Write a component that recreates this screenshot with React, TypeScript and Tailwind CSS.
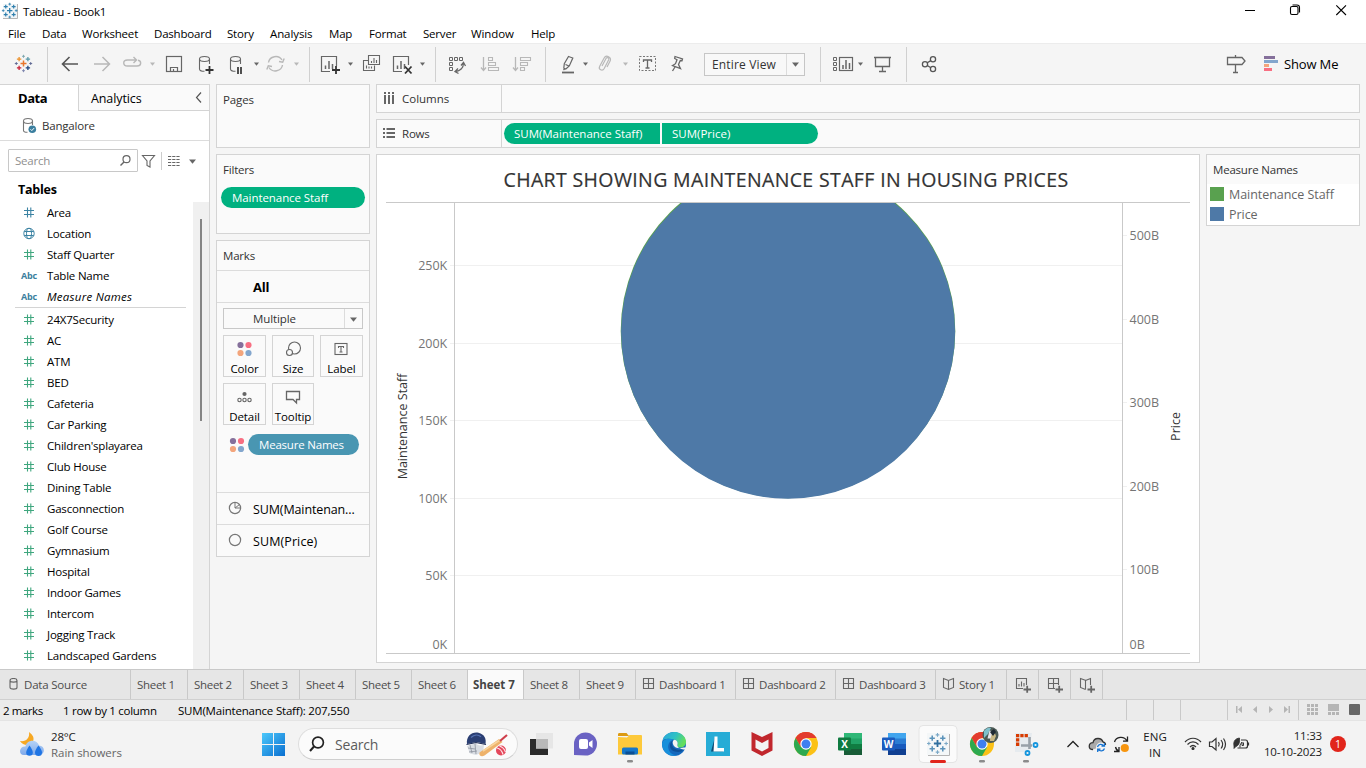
import React from "react";

type P = { x: number; y: number; w: number; h: number; children?: React.ReactNode };

/* An inline drawing whose viewBox is expressed in window coordinates. */
function Ic({ x, y, w, h, children }: P) {
  return (
    <svg
      width={w}
      height={h}
      viewBox={`${x} ${y} ${w} ${h}`}
      fill="none"
      className="block shrink-0"
      stroke="#666"
      strokeWidth="1.2"
    >
      {children}
    </svg>
  );
}

const G = "#666666";
const L = "#b8b8b8";

function Caret({ x, y = 63, c = G, s = 2.5 }: { x: number; y?: number; c?: string; s?: number }) {
  return <path d={`M${x - s} ${y - 0.5}h${2 * s}l${-s} ${s + 0.8}z`} fill={c} stroke="none" />;
}

function Plus({ x, y, r, c, w = 1 }: { x: number; y: number; r: number; c: string; w?: number }) {
  return <path d={`M${x - r} ${y}h${2 * r}M${x} ${y - r}v${2 * r}`} stroke={c} strokeWidth={w} />;
}

function Logo({ x, y, s, c }: { x: number; y: number; s: number; c: string[] }) {
  const a = 4.4 * s;
  const b = 7.2 * s;
  return (
    <>
      <Plus x={x} y={y} r={3 * s} c={c[0]} w={1.5 * s} />
      <Plus x={x - a} y={y - a} r={2.2 * s} c={c[1]} w={1.3 * s} />
      <Plus x={x + a} y={y - a} r={2.2 * s} c={c[2]} w={1.3 * s} />
      <Plus x={x - a} y={y + a} r={2.2 * s} c={c[3]} w={1.3 * s} />
      <Plus x={x + a} y={y + a} r={2.2 * s} c={c[4]} w={1.3 * s} />
      <Plus x={x} y={y - b} r={1.5 * s} c={c[5]} w={0.9 * s} />
      <Plus x={x - b} y={y} r={1.5 * s} c={c[6]} w={0.9 * s} />
      <Plus x={x + b} y={y} r={1.5 * s} c={c[7]} w={0.9 * s} />
      <Plus x={x} y={y + b} r={1.5 * s} c={c[8]} w={0.9 * s} />
    </>
  );
}

const BLUES = Array(9).fill("#2f7fae");
const TASK_BLUES = ["#2f6f9f", "#5b93ba", "#5b93ba", "#5b93ba", "#5b93ba", "#7ba8c6", "#7ba8c6", "#7ba8c6", "#7ba8c6"];
const COLORS = ["#e8762c", "#eb912c", "#5b9aa9", "#c72037", "#1f457e", "#7aa5ad", "#5c6692", "#5c6692", "#7b83ad"];

function Sep({ x }: { x: number }) {
  return <path d={`M${x + 0.5} 47v35`} stroke="#d0d0d0" strokeWidth="1" />;
}

function Cyl({ x, y }: { x: number; y: number }) {
  return (
    <path d={`M${x} ${y + 2.5}c0-3.3 10-3.3 10 0s-10 3.3-10 0v10c0 1.4 2 2.3 5 2.3M${x + 10} ${y + 2.5}v5`} strokeWidth="1.1" />
  );
}

function Dots({ x, y }: { x: number; y: number }) {
  return (
    <g stroke="none">
      <circle cx={x - 4} cy={y - 4} r="3.1" fill="#85709b" />
      <circle cx={x + 4} cy={y - 4} r="3.1" fill="#f86f82" />
      <circle cx={x - 4} cy={y + 4} r="3.1" fill="#f3a57c" />
      <circle cx={x + 4} cy={y + 4} r="3.1" fill="#83a6cd" />
    </g>
  );
}

function TitleBar() {
  return (
    <div className="flex h-[23px] w-full items-center justify-between">
      <div className="flex items-center">
        <Ic x={0} y={0} w={23} h={23}>
          <path d="M3 4h14v14H3z" fill="#f2f6f8" stroke="none" />
          <path d="M17.5 4v14.500H3" stroke="#b5b5b5" strokeWidth="1" />
          <Logo x={9.7} y={10.6} s={0.9} c={BLUES} />
        </Ic>
        <span>Tableau - Book1</span>
      </div>
      <Ic x={1236} y={0} w={130} h={23}>
        <path d="M1245 10.500h10" stroke="#000" strokeWidth="1" />
        <rect x="1290.500" y="6.500" width="7.500" height="8" rx="1.500" stroke="#000" strokeWidth="1.100" />
        <path d="M1292.500 5h4.500a2.500 2.500 0 0 1 2.500 2.500v5" stroke="#000" strokeWidth="1.100" />
        <path d="M1336.300 5.300l9.700 9.700M1346 5.300l-9.700 9.700" stroke="#000" strokeWidth="1.100" />
      </Ic>
    </div>
  );
}

function Menu() {
  return (
    <div className="flex h-5 w-full items-center pl-2 pt-[2px]">
      <span className="w-[34px]">File</span>
      <span className="w-[40px]">Data</span>
      <span className="w-[72px] tracking-[-0.2px]">Worksheet</span>
      <span className="w-[73px]">Dashboard</span>
      <span className="w-[43px]">Story</span>
      <span className="w-[59px] tracking-[-0.1px]">Analysis</span>
      <span className="w-[40px]">Map</span>
      <span className="w-[54px]">Format</span>
      <span className="w-[48px]">Server</span>
      <span className="w-[60px] tracking-[-0.1px]">Window</span>
      <span>Help</span>
    </div>
  );
}

function Bars({ x, y }: { x: number; y: number }) {
  return <path d={`M${x} ${y}v-3.500M${x + 3.5} ${y}v-8M${x + 7} ${y}v-5`} strokeWidth="1.500" />;
}

function Toolbar() {
  return (
    <div className="flex h-[41px] w-full items-center border-t border-[#ececec] bg-[#f5f5f5]">
      <Ic x={0} y={44} w={55} h={40}>
        <Logo x={23.5} y={63.5} s={1} c={COLORS} />
        <Sep x={47} />
      </Ic>
      <Ic x={55} y={44} w={64} h={40}>
        <path d="M78 64H63M69.500 57l-7 7 7 7" stroke="#555" strokeWidth="1.600" />
        <path d="M94 64h15M102.500 57l7 7-7 7" stroke={L} strokeWidth="1.500" />
      </Ic>
      <Ic x={119} y={44} w={42} h={40}>
        <path d="M138 60.300c3.800.7 3.600 5.700-1 5.700h-9.500c-5 0-5-6 0-6h8.500M133.500 57l3 3-3 3" stroke={L} strokeWidth="1.400" />
        <Caret x={152.5} c={L} />
      </Ic>
      <Ic x={161} y={44} w={30} h={40}>
        <rect x="166.500" y="56.500" width="15" height="15" strokeWidth="1.200" />
        <path d="M170.500 71v-3.500h7V71M173.500 71v-2" strokeWidth="1.200" />
      </Ic>
      <Ic x={191} y={44} w={72} h={40}>
        <Cyl x={199.5} y={56.5} />
        <path d="M205.500 70h8M209.500 66v8" stroke="#333" strokeWidth="1.800" />
        <Cyl x={230.5} y={56.5} />
        <path d="M238 67v7M241 67v7" stroke="#333" strokeWidth="1.700" />
        <Caret x={256.5} />
      </Ic>
      <Ic x={263} y={44} w={52} h={40}>
        <path d="M268.500 62.500a7.300 7 0 0 1 13.500-2.500M282.500 65a7.300 7 0 0 1-13.500 2.500M279 61.500l3.700.8 1.500-3.800M272 66.500l-3.700-.8-1.500 3.800" stroke={L} strokeWidth="1.400" />
        <Caret x={296.5} c={L} />
        <Sep x={309} />
      </Ic>
      <Ic x={315} y={44} w={43} h={40}>
        <path d="M330 71.500h-8.500v-15h15V66" />
        <Bars x={325.5} y={69} />
        <path d="M332 70h8M336 66v8" stroke="#333" strokeWidth="1.800" />
        <Caret x={350.5} />
      </Ic>
      <Ic x={358} y={44} w={27} h={40}>
        <path d="M368.500 64.500v-9h11v9z M368 60.500h-4.500v10h11v-5" strokeWidth="1.100" />
        <path d="M371.500 63v-2M374 63v-5M376.500 63v-3M366.500 68.500v-3M369 68.500v-2M371.500 68.500v-2" strokeWidth="1.100" />
      </Ic>
      <Ic x={385} y={44} w={56} h={40}>
        <path d="M402 71.500h-8.500v-15h15V65" />
        <Bars x={397.5} y={69} />
        <path d="M405 66.500l6.500 7M411.500 66.500l-6.500 7" stroke="#333" strokeWidth="1.800" />
        <Caret x={422.5} />
        <Sep x={435} />
      </Ic>
      <Ic x={441} y={44} w={30} h={40}>
        <path d="M449.500 57.500h3v3h-3zM454.500 57.500h3v3h-3zM459.500 57.500h3v3h-3zM449.500 62.500h3v3h-3zM449.500 67.500h3v3h-3z" strokeWidth="1" />
        <path d="M463.500 63c0 5-3.500 8-8 8.500M461 65.500l2.500-3 2 3.500M458 68.500l-3 3 3.500 2" strokeWidth="1.300" />
      </Ic>
      <Ic x={471} y={44} w={32} h={40}>
        <path d="M483.500 57v13M481 67.500l2.500 3 2.500-3" stroke={L} strokeWidth="1.300" />
        <path d="M488.500 57.500h4v3h-4zM488.500 62.500h7v3h-7zM488.500 67.500h10v3h-10z" stroke={L} strokeWidth="1.100" />
      </Ic>
      <Ic x={503} y={44} w={50} h={40}>
        <path d="M515.500 57v13M513 67.500l2.500 3 2.500-3" stroke={L} strokeWidth="1.300" />
        <path d="M520.500 57.500h10v3h-10zM520.500 62.500h7v3h-7zM520.500 67.500h4v3h-4z" stroke={L} strokeWidth="1.100" />
        <Sep x={545} />
      </Ic>
      <Ic x={553} y={44} w={39} h={40}>
        <path d="M562 72.500h12" strokeWidth="1.800" />
        <path d="M568.500 56.500l4.300 1.500-3.500 8-3.500 3-2-.8.5-4.500zM565.500 64.500l3.500 1.500M563.500 70l1.500-1.500" />
        <Caret x={585.5} />
      </Ic>
      <Ic x={592} y={44} w={42} h={40}>
        <path d="M602 66l4-7.500c1-1.800 3.500-.5 2.700 1.200l-4.500 8.800c-1.800 3.300-6.200 1-4.500-2.300l4.300-8c2.200-4 8-1 6 3l-3 5.800" stroke={L} strokeWidth="1.200" />
        <Caret x={625.5} c={L} />
      </Ic>
      <Ic x={634} y={44} w={70} h={40}>
        <rect x="639.500" y="56.500" width="16" height="14" stroke="#777" strokeWidth="1" strokeDasharray="2 1.500" />
        <path d="M643.500 62v-2h8v2M647.500 60v8M645.500 68h4" strokeWidth="1.300" />
        <path d="M675 56.500l7.500 2.500-.5 1.700-1.700-.2-1.800 4 2 4.200-8-3 3-2 1.500-4-2.300-1.200zM675 67l-2.500 4" strokeWidth="1.300" />
      </Ic>
      <div className="flex h-[23px] w-[101px] items-center border border-[#c6c6c6] bg-[#f8f8f8]">
        <span className="w-[81px] pl-[7px] pt-px text-[12px] tracking-[0.15px] text-[#333]">Entire View</span>
        <div className="flex h-full items-center border-l border-[#dcdcdc]">
          <Ic x={787} y={54} w={17} h={20}>
            <Caret x={795.5} s={3.5} />
          </Ic>
        </div>
      </div>
      <Ic x={805} y={44} w={105} h={40}>
        <Sep x={820} />
        <path d="M833.500 57.500h3v3h-3zM833.500 62.500h3v3h-3zM833.500 67.500h3v3h-3z" strokeWidth="1" />
        <rect x="839.500" y="57.500" width="13" height="13" />
        <path d="M843 69v-4M846 69v-9M849.500 69v-6" strokeWidth="1.500" />
        <Caret x={860.5} />
        <path d="M874 57.500h17M875.500 58v8.500h14V58M882.500 67v4M879 71.500h7" strokeWidth="1.300" />
        <Sep x={906} />
      </Ic>
      <Ic x={910} y={44} w={40} h={40}>
        <g stroke="#555" strokeWidth="1.300">
          <circle cx="925" cy="64.200" r="2.600" />
          <circle cx="933" cy="59.200" r="2.600" />
          <circle cx="933" cy="69" r="2.600" />
          <path d="M927.300 62.800l3.500-2.200M927.300 65.500l3.500 2.200" />
        </g>
      </Ic>
      <div className="grow" />
      <Ic x={1220} y={44} w={64} h={40}>
        <path d="M1227.500 57.500h14.500l3 3.500-3 3.500h-14.500zM1235.500 55v2.500M1235.500 64.500v8M1233 72.500h5" strokeWidth="1.300" />
        <g stroke="none">
          <path d="M1264 56h11v3h-11z" fill="#85709b" />
          <path d="M1264 60h14v3h-14z" fill="#83a6cd" />
          <path d="M1264 64h5v3h-5z" fill="#f3a57c" />
          <path d="M1264 68h8v3h-8z" fill="#f86f82" />
        </g>
      </Ic>
      <span className="w-[82px] text-[13px] tracking-[-0.15px]">Show Me</span>
    </div>
  );
}

function Hash({ c }: { c: string }) {
  return (
    <svg width="12" height="13" viewBox="0 0 12 13" className="mx-auto block">
      <path d="M1 4.500h10M1 8.500h10M4.500 1.500v10M7.800 1.500v10" stroke={c} strokeWidth="1.100" fill="none" />
    </svg>
  );
}

function Field({ kind, name }: { kind: string; name: string }) {
  return (
    <div className="flex h-[21px] items-center pl-[20px]">
      <div className="w-[18px] text-center">
        {kind === "abc" && <span className="block text-[9px] font-bold leading-none tracking-[-0.1px] text-[#3c7f9e]">Abc</span>}
        {kind === "dim" && <Hash c="#3c83a3" />}
        {kind === "mea" && <Hash c="#3fa67e" />}
        {kind === "geo" && (
          <svg width="12" height="13" viewBox="0 0 12 13" fill="none" stroke="#3c83a3" strokeWidth="1" className="mx-auto block">
            <circle cx="6" cy="6.500" r="5.200" />
            <ellipse cx="6" cy="6.500" rx="2.500" ry="5.200" />
            <path d="M1.200 4.500h9.600M1.200 8.500h9.600" />
          </svg>
        )}
      </div>
      <span className={name === "Measure Names" ? "ml-[9px] pt-px italic tracking-[0.25px]" : "ml-[9px] pt-px"}>{name}</span>
    </div>
  );
}

const MEASURES = [
  "24X7Security", "AC", "ATM", "BED", "Cafeteria", "Car Parking", "Children'splayarea", "Club House",
  "Dining Table", "Gasconnection", "Golf Course", "Gymnasium", "Hospital", "Indoor Games", "Intercom",
  "Jogging Track", "Landscaped Gardens",
];

function Sidebar() {
  return (
    <div className="flex h-full w-[210px] shrink-0 flex-col border-r border-[#d4d4d4] bg-white">
      <div className="flex h-[27px] border-t border-[#d4d4d4]">
        <div className="w-[78px] pl-[18px] text-[13px] font-bold leading-[26px] tracking-[-0.45px]">Data</div>
        <div className="flex grow items-center border-b border-l border-[#d4d4d4] bg-[#fafafa] pl-3">
          <span className="w-[102px] pt-[3px] text-[12.5px] tracking-[-0.1px]">Analytics</span>
          <Ic x={193} y={88} w={14} h={18}>
            <path d="M201 91.500l-4.500 5 4.500 5" stroke="#555" />
          </Ic>
        </div>
      </div>
      <div className="flex h-[30px] items-center border-b border-[#dcdcdc] pl-[22px] text-[#333]">
        <Ic x={22} y={115} w={20} h={22}>
          <path d="M23.500 121c0-3.300 9-3.300 9 0s-9 3.300-9 0v9.500c0 1.400 2 1.800 4 1.800M32.500 121v4" stroke="#777" strokeWidth="1.100" />
          <circle cx="32.300" cy="129.300" r="3.800" fill="#3b7f9f" stroke="none" />
          <path d="M30.500 129.300l1.300 1.300 2.300-2.500" stroke="#fff" strokeWidth="1" />
        </Ic>
        <span className="pt-px">Bangalore</span>
      </div>
      <div className="flex h-[39px] items-center pl-2">
        <div className="flex h-[23px] w-[130px] items-center justify-between rounded-[1px] border border-[#c8c8c8] pl-[6px]">
          <span className="pt-px text-[11.5px] tracking-[-0.2px] text-[#8f8f8f]">Search</span>
          <Ic x={118} y={152} w={18} h={18}>
            <circle cx="125.500" cy="159.200" r="3.500" />
            <path d="M123 162l-3.500 3.500" strokeWidth="1.500" />
          </Ic>
        </div>
        <Ic x={138} y={148} w={68} h={24}>
          <path d="M142.500 154.500h12l-4.500 5.500v6l-3-1.500V160z" strokeWidth="1.100" />
          <path d="M161.500 151v18" stroke="#ccc" strokeWidth="1" />
          <path d="M168 155.500h12M168 158.500h12M168 161.500h12M168 164.500h12" strokeDasharray="3.200 1" strokeWidth="1.100" />
          <Caret x={192.5} y={159} s={3.5} />
        </Ic>
      </div>
      <div className="h-[22px] pl-[18px] text-[12.5px] font-bold leading-[20px] tracking-[-0.25px]">Tables</div>
      <div className="flex min-h-0 grow overflow-hidden">
        <div className="w-[193px]">
          <Field kind="dim" name="Area" />
          <Field kind="geo" name="Location" />
          <Field kind="mea" name="Staff Quarter" />
          <Field kind="abc" name="Table Name" />
          <Field kind="abc" name="Measure Names" />
          <div className="ml-[15px] h-[2px] w-[171px] border-t border-[#d4d4d4]" />
          {MEASURES.map((m) => (
            <Field key={m} kind="mea" name={m} />
          ))}
        </div>
        <div className="w-[16px] bg-[#f0f0f0] pl-[7px] pt-[17px]">
          <div className="h-[202px] w-[2px] bg-[#858585]" />
        </div>
      </div>
    </div>
  );
}

function MarkButton({ label, wide, children }: { label: string; wide?: boolean; children: React.ReactNode }) {
  return (
    <div className={(wide ? "w-[43px]" : "w-[42px]") + " flex h-[42px] flex-col items-center border border-[#d4d4d4] bg-[#fafafa]"}>
      <svg width="40" height="25" viewBox="0 0 40 25" fill="none" stroke="#666" strokeWidth="1.100" className="block">
        {children}
      </svg>
      <span className="leading-[15px] tracking-[-0.1px]">{label}</span>
    </div>
  );
}

function Cards() {
  return (
    <div className="flex w-[154px] shrink-0 flex-col gap-[6px]">
      <div className="h-[64px] border border-[#d4d4d4] bg-[#fafafa] pl-[6px] leading-[29px] tracking-[-0.1px] text-[#333]">Pages</div>
      <div className="h-[80px] border border-[#d4d4d4] bg-[#fafafa] text-[#333]">
        <div className="h-[32px] pl-[6px] leading-[29px]">Filters</div>
        <div className="mx-1 h-[21px] rounded-full bg-[#00b180] pl-[11px] leading-[21px] tracking-[-0.07px] text-white">Maintenance Staff</div>
      </div>
      <div className="flex h-[317px] flex-col border border-[#d4d4d4] bg-[#fafafa]">
        <div className="h-[30px] border-b border-[#dcdcdc] pl-[6px] leading-[29px] text-[#333]">Marks</div>
        <div className="h-[32px] border-b border-[#dcdcdc] pl-[36px] text-[13px] font-bold leading-[32px]">All</div>
        <div className="mx-[6px] mt-[5px] flex h-[21px] items-center border border-[#c8c8c8]">
          <span className="w-[120px] pl-[29px] pt-px tracking-[-0.1px] text-[#333]">Multiple</span>
          <div className="flex h-full grow items-center border-l border-[#dcdcdc]">
            <Ic x={345} y={310} w={17} h={18}>
              <Caret x={353.5} y={318} s={3.5} />
            </Ic>
          </div>
        </div>
        <div className="ml-[6px] mt-[6px] grid grid-cols-[43px_42px_43px] gap-[6px]">
          <MarkButton label="Color" wide>
            <Dots x={19.5} y={13} />
          </MarkButton>
          <MarkButton label="Size">
            <circle cx="21.500" cy="12" r="6" />
            <circle cx="16.500" cy="16.500" r="3" fill="#fafafa" />
          </MarkButton>
          <MarkButton label="Label" wide>
            <rect x="13" y="7.500" width="12" height="11" />
            <path d="M16.500 12v-1.500h5V12M19 10.500V16M17.500 16h3" />
          </MarkButton>
          <MarkButton label="Detail" wide>
            <g transform="translate(-1 -1)">
              <circle cx="20.500" cy="11" r="2.100" fill="#666" stroke="none" />
              <circle cx="15.500" cy="17" r="1.700" />
              <circle cx="20.500" cy="17" r="1.700" />
              <circle cx="25.500" cy="17" r="1.700" />
            </g>
          </MarkButton>
          <MarkButton label="Tooltip">
            <path d="M13.500 7.500h13v8h-3v3.500l-3.500-3.500h-6.500z" strokeWidth="1.300" />
          </MarkButton>
        </div>
        <div className="mt-[9px] flex h-[58px]">
          <Ic x={217} y={434} w={31} h={21}>
            <Dots x={237} y={445} />
          </Ic>
          <div className="h-[21px] w-[111px] rounded-full bg-[#4996b2] pl-[11px] leading-[21px] text-white">Measure Names</div>
        </div>
        <div className="flex h-[32px] items-center border-t border-[#dcdcdc]">
          <Ic x={217} y={493} w={36} h={31}>
            <circle cx="235" cy="508" r="5.600" stroke="#777" />
            <path d="M235 502.500v5.500l4.500-3.500M235 508h5" stroke="#777" strokeWidth="1" />
          </Ic>
          <span className="pt-[2px] text-[12.5px] tracking-[-0.12px]">SUM(Maintenan...</span>
        </div>
        <div className="flex h-[32px] items-center border-t border-[#dcdcdc]">
          <Ic x={217} y={525} w={36} h={31}>
            <circle cx="235" cy="540" r="5.600" stroke="#777" />
          </Ic>
          <span className="pt-[2px] text-[12.5px] tracking-[0.1px]">SUM(Price)</span>
        </div>
      </div>
    </div>
  );
}

const LEFT: [string, number][] = [["250K", 265], ["200K", 343], ["150K", 420], ["100K", 498], ["50K", 575]];
const RIGHT: [string, number][] = [["500B", 235], ["400B", 319], ["300B", 402], ["200B", 486], ["100B", 569]];

function Chart() {
  return (
    <svg width="822" height="461" viewBox="377 201 822 461" className="block tracking-[-0.1px]">
      <defs>
        <clipPath id="plot">
          <rect x="455" y="203" width="667" height="450" />
        </clipPath>
      </defs>
      <g stroke="#f0f0f0" fill="none">
        {LEFT.map(([t, y]) => (
          <path key={t} d={`M450 ${y + 0.5}H1122`} />
        ))}
        {RIGHT.map(([t, y]) => (
          <path key={t} d={`M1123 ${y + 0.5}h4`} />
        ))}
      </g>
      <g clipPath="url(#plot)">
        <circle cx="788" cy="331" r="167.300" fill="#59a14f" />
        <circle cx="788.100" cy="331.800" r="167" fill="#4e79a7" />
      </g>
      <path d="M386 202.500H1190M386 653.500H1190M454.500 203V653M1122.500 203V653" stroke="#c9c9c9" fill="none" />
      <g fill="#757575" fontSize="12.500">
        {[...LEFT, ["0K", 644] as [string, number]].map(([t, y]) => (
          <text key={t} x="447" y={y + 5} textAnchor="end">{t}</text>
        ))}
        {[...RIGHT, ["0B", 644] as [string, number]].map(([t, y]) => (
          <text key={t} x="1129.500" y={y + 5} className="tracking-[0px]">{t}</text>
        ))}
      </g>
      <g fill="#333" fontSize="12.500" className="tracking-[0px]">
        <text transform="translate(406.500 426.500) rotate(-90)" textAnchor="middle">Maintenance Staff</text>
        <text transform="translate(1179.500 426.500) rotate(-90)" textAnchor="middle">Price</text>
      </g>
    </svg>
  );
}

function Workspace() {
  return (
    <div className="flex grow flex-col gap-[6px] pr-[6px]">
      <div className="flex h-[29px] items-center border border-[#d4d4d4] bg-[#fafafa] text-[#333]">
        <Ic x={377} y={85} w={25} h={27}>
          <path d="M385 95v9M389 95v9M393 95v9M385 92v2M389 92v2M393 92v2" strokeWidth="2" />
        </Ic>
        <span className="w-[99px] tracking-[0px]">Columns</span>
        <div className="h-full w-px bg-[#d4d4d4]" />
      </div>
      <div className="flex h-[29px] items-center border border-[#d4d4d4] bg-[#fafafa] text-[#333]">
        <Ic x={377} y={120} w={25} h={27}>
          <path d="M383 129h2M383 133h2M383 137h2M386.500 129h8.500M386.500 133h8.500M386.500 137h8.500" strokeWidth="2" />
        </Ic>
        <span className="w-[99px]">Rows</span>
        <div className="h-full w-px bg-[#d4d4d4]" />
        <div className="ml-[2px] flex gap-[2px] text-white">
          <div className="h-[21px] w-[156px] rounded-l-full bg-[#00b180] pl-[10px] leading-[21px] tracking-[-0.03px]">SUM(Maintenance Staff)</div>
          <div className="h-[21px] w-[156px] rounded-r-full bg-[#00b180] pl-[10px] leading-[21px] tracking-[0px]">SUM(Price)</div>
        </div>
      </div>
      <div className="flex gap-[6px]">
        <div className="h-[509px] w-[824px] border border-[#d4d4d4] bg-white">
          <div className="h-[46px] pr-[4px] pt-[12px] text-center text-[19.5px] font-medium leading-[26px] tracking-[0.37px] text-[#333] [-webkit-text-stroke:0.2px_#333]">
            CHART SHOWING MAINTENANCE STAFF IN HOUSING PRICES
          </div>
          <Chart />
        </div>
        <div className="h-[72px] w-[154px] border border-[#d4d4d4] bg-white">
          <div className="h-[29px] bg-[#fafafa] pl-[6px] leading-[30px] text-[#333]">Measure Names</div>
          <div className="flex h-5 items-center gap-[5px] pl-[3px] text-[12.5px] tracking-[-0.05px] text-[#666]">
            <div className="h-[14px] w-[14px] bg-[#59a14f]" />
            <span className="pt-[2px]">Maintenance Staff</span>
          </div>
          <div className="flex h-5 items-center gap-[5px] pl-[3px] text-[12.5px] tracking-[-0.05px] text-[#666]">
            <div className="h-[14px] w-[14px] bg-[#4e79a7]" />
            <span className="pt-[2px]">Price</span>
          </div>
        </div>
      </div>
    </div>
  );
}

function GridGlyph() {
  return <path d="M1.500 1.500h10v10h-10zM6.500 1.500v10M1.500 6.500h10" />;
}
function BookGlyph() {
  return <path d="M6.500 3.500L1.500 1.500v9l5 2 5-2v-9zM6.500 3.500v9" />;
}

function Tab({ cls, children }: { cls: string; children: React.ReactNode }) {
  return <div className={cls + " flex h-full items-center border-r border-[#c9c9c9]"}>{children}</div>;
}

function Glyph({ w = 13, children }: { w?: number; children: React.ReactNode }) {
  return (
    <svg width={w} height="16" viewBox={`0 0 ${w} 16`} fill="none" stroke="#666" strokeWidth="1.100" className="mr-[3px] block shrink-0">
      {children}
    </svg>
  );
}

function BottomTabs() {
  return (
    <div className="flex h-[31px] w-full shrink-0 border-y border-t-[#c9c9c9] border-b-[#d0d0d0] bg-[#e6e6e6] text-[#4d4d4d]">
      <Tab cls="w-[131px] pl-[9px]">
        <svg width="15" height="14" viewBox="0 0 15 14" fill="none" stroke="#666" strokeWidth="1.100" className="block">
          <path d="M1 2.500c0-2.700 7-2.700 7 0v7c0 2.200-7 2.200-7 0zM1 2.500c0 2.200 7 2.200 7 0" />
        </svg>
        Data Source
      </Tab>
      <Tab cls="w-[57px] pl-[6px] tracking-[-0.3px]">Sheet 1</Tab>
      {[2, 3, 4, 5, 6, 7, 8, 9].map((n) => (
        <Tab key={n} cls={n === 7 ? "w-[56px] bg-[#fafafa] pl-[5px] font-bold text-[#444] tracking-[-0.05px]" : "w-[56px] pl-[6px] tracking-[-0.3px]"}>
          Sheet {n}
        </Tab>
      ))}
      {[1, 2, 3].map((n) => (
        <Tab key={n} cls="w-[100px] pl-[6px]">
          <Glyph><GridGlyph /></Glyph>
          <span className="ml-px">Dashboard {n}</span>
        </Tab>
      ))}
      <Tab cls="w-[71px] pl-[6px]">
        <Glyph><BookGlyph /></Glyph>
        <span className="ml-px">Story 1</span>
      </Tab>
      <Tab cls="w-[32px] pl-[8px]">
        <Glyph w={20}>
          <path d="M8 11.500H1.500v-10h10V8M4 9.500V7M6.500 9.500V4.500M9 9.500V6" />
          <path d="M8.500 12.500h7.500M12.200 8.800v7" strokeWidth="1.800" />
        </Glyph>
      </Tab>
      <Tab cls="w-[32px] pl-[8px]">
        <Glyph w={20}>
          <path d="M8 11.500H1.500v-10h10V8M6.500 1.500v10M1.500 6.500h10" />
          <path d="M8.500 12.500h7.500M12.200 8.800v7" strokeWidth="1.800" />
        </Glyph>
      </Tab>
      <Tab cls="w-[32px] pl-[8px]">
        <Glyph w={20}>
          <path d="M7 3.500L1.500 1.500v9l5 2M6.500 3.500v9M6.500 3.500l5-2V8" />
          <path d="M8.500 12.500h7.500M12.200 8.800v7" strokeWidth="1.800" />
        </Glyph>
      </Tab>
    </div>
  );
}

function Status() {
  return (
    <div className="flex h-[20px] w-full shrink-0 items-center bg-[#ebebeb]">
      <span className="w-[63px] pl-[3px] pt-[2px] tracking-[-0.45px]">2 marks</span>
      <span className="w-[115px] pt-[2px] tracking-[-0.28px]">1 row by 1 column</span>
      <span className="pt-[2px]">SUM(Maintenance Staff): 207,550</span>
      <div className="grow" />
      <Ic x={999} y={700} w={367} h={20}>
        <path d="M999.500 700v20M1126.500 700v20M1153.500 700v20M1180.500 700v20M1227.500 700v20M1298.500 700v20" stroke="#c9c9c9" strokeWidth="1" />
        <g fill="#b5b5b5" stroke="none">
          <path d="M1236 706h1.500v7h-1.500zM1242 706v7l-4-3.500zM1257 706v7l-4-3.500zM1269 706v7l4-3.500zM1284 706v7l4-3.500zM1288.500 706h1.500v7h-1.500z" />
          <path d="M1307 704h3v3h-3zM1311 704h3v3h-3zM1315 704h3v3h-3zM1307 708h3v3h-3zM1311 708h3v3h-3zM1315 708h3v3h-3zM1307 712h3v3h-3zM1311 712h3v3h-3zM1315 712h3v3h-3z" />
          <path d="M1328 704h11v7h-11zM1328 712h3v3h-3zM1332 712h3v3h-3zM1336 712h3v3h-3z" />
          <rect x="1349" y="704" width="11" height="11" rx="1" fill="#666" />
        </g>
      </Ic>
    </div>
  );
}

function Chrome({ x }: { x: number }) {
  return (
    <g stroke="none" transform={`translate(${x} 744)`}>
      <circle r="12" fill="#fbc116" />
      <path d="M-10.400-6A12 12 0 0 1 10.400-6L0-6-5.200 3z" fill="#e33b2e" />
      <path d="M-10.400-6A12 12 0 0 0 0 12L5.200 3-5.200 3z" fill="#2da94f" />
      <path d="M-10.400-6A12 12 0 0 1 10.400-6L0-6z" fill="#e33b2e" />
      <circle r="5.700" fill="#fff" />
      <circle r="4.500" fill="#3f7ff0" />
    </g>
  );
}

function Office({ x, letter, c }: { x: number; letter: string; c: string[] }) {
  return (
    <g stroke="none">
      <path d={`M${x - 6} 733h18v6h-18z`} fill={c[0]} />
      <path d={`M${x - 6} 738.500h18v5.500h-18z`} fill={c[1]} />
      <path d={`M${x - 6} 744h18v5.500h-18z`} fill={c[2]} />
      <path d={`M${x - 6} 749h18v6h-18z`} fill={c[3]} />
      <rect x={x - 12} y="737.500" width="13" height="13" rx="1" fill={c[4]} />
      <text x={x - 5.5} y="747.800" textAnchor="middle" fontSize="10" fontWeight="700" fill="#fff">{letter}</text>
    </g>
  );
}

function Taskbar() {
  return (
    <div className="flex h-[48px] w-full shrink-0 items-center bg-[#f3f3f3] shadow-[inset_0_1px_0_#e4e4e4]">
      <Ic x={0} y={720} w={51} h={48}>
        <defs>
          <linearGradient id="cl" x1="0" y1="0" x2="0" y2="1">
            <stop offset="0" stopColor="#b5d3f7" />
            <stop offset="1" stopColor="#7fa9ea" />
          </linearGradient>
          <linearGradient id="win" x1="0" y1="0" x2="1" y2="1">
            <stop offset="0" stopColor="#4cc8fb" />
            <stop offset="1" stopColor="#0a6fd0" />
          </linearGradient>
        </defs>
        <g stroke="none">
          <path d="M29 732c4 3 5.500 6 4 9.500-2.500 5-10 4.500-13-.5 6 1 10-3 9-9z" fill="#f6a823" />
          <path d="M24 755c-6 0-5-9 1.500-8.500 1-7 11.500-8 13.500-1 6.500 0 6.500 9.500 0 9.500z" fill="url(#cl)" />
          <path d="M29.500 745.500c2 3 3.300 5 3.300 7a3.300 3.300 0 0 1-6.600 0c0-2 1.300-4 3.300-7z" fill="#1f75e4" />
          <path d="M38.500 745.500c2.200 3 3.500 5 3.500 7a3.500 3.500 0 0 1-7 0c0-2 1.300-4 3.500-7z" fill="#1f75e4" />
        </g>
      </Ic>
      <div className="flex w-[202px] flex-col pt-[2px]">
        <span className="text-[11.5px] leading-[16px] text-[#1a1a1a]">28°C</span>
        <span className="text-[11.5px] leading-[16px] tracking-[-0.05px] text-[#666]">Rain showers</span>
      </div>
      <Ic x={253} y={720} w={45} h={48}>
        <path d="M262 733h11v11h-11zM274 733h11v11h-11zM262 745h11v11h-11zM274 745h11v11h-11z" fill="url(#win)" stroke="none" />
      </Ic>
      <div className="flex h-8 w-[220px] items-center rounded-full border border-[#dedede] border-b-[#cfcfcf] bg-[#fbfbfb]">
        <Ic x={299} y={729} w={36} h={30}>
          <circle cx="318" cy="742.500" r="5.400" stroke="#222" strokeWidth="1.700" />
          <path d="M314 746.500l-4 4.500" stroke="#222" strokeWidth="2" />
        </Ic>
        <span className="w-[127px] pt-px text-[14px] tracking-[-0.2px] text-[#5c5c5c]">Search</span>
        <Ic x={462} y={729} w={50} h={30}>
          <g stroke="none">
            <path d="M467 746l9-3c1 2 3 3 8 2l-1 7-7 3-6-1.500z" fill="#d9dde3" />
            <path d="M467 744c-1-8 5-12.500 11.500-11.200 6 1.500 8 6 7 11.200l-9-2z" fill="#2b3f73" />
            <path d="M471 737.500c3-3 7-3.300 10-.8" stroke="#5470b0" strokeWidth="1.200" fill="none" />
            <path d="M466.500 744.500l9.500-2 10 2" stroke="#1e2d57" strokeWidth="1.200" fill="none" />
            <path d="M468 748l7 1M470 745l2 8M475 744l1 10M469 752l8-1" stroke="#8b929d" strokeWidth=".8" fill="none" />
            <path d="M499 739l3.500 3-18 13.500c-3 2-6 0-5-3z" fill="#eeb26b" />
            <path d="M483 751l17-11" stroke="#f8d49d" strokeWidth="1.500" />
            <path d="M500 741l7-6" stroke="#cf3f4c" strokeWidth="2.200" />
            <circle cx="501" cy="750.500" r="5" fill="#e5485c" />
            <path d="M497 748c3 .5 5 3 6 6.500M499.500 746c3 1 5 3 6 6" stroke="#fde5e8" strokeWidth="1.200" fill="none" />
          </g>
        </Ic>
      </div>
      <Ic x={518} y={720} w={45} h={48}>
        <g stroke="none">
          <path d="M530 739h18v16h-18z" fill="#2b2b2b" />
          <path d="M536 733h17v15.500h-17z" fill="#e6e6e6" />
          <path d="M536 739h12v9.500h-12z" fill="#b9b9b9" />
        </g>
      </Ic>
      <Ic x={563} y={720} w={45} h={48}>
        <path d="M574 755v-11a11.500 11.500 0 1 1 11.500 11.500z" fill="#6a62c3" stroke="none" />
        <rect x="579" y="739" width="9" height="10" rx="2" fill="#fff" stroke="none" />
        <path d="M589 742.500l3.500-2.500v8l-3.500-2.500z" fill="#fff" stroke="none" />
      </Ic>
      <Ic x={608} y={720} w={44} h={48}>
        <g stroke="none">
          <path d="M618 734.500c0-1 .5-1.500 1.500-1.500h7l2.500 3h-11z" fill="#dc9a12" />
          <path d="M618 737l9 .5 2.500-2.500H641a1 1 0 0 1 1 1v18.500h-24z" fill="#fdc93b" />
          <rect x="622" y="747.500" width="16" height="7" rx="1.500" fill="#1677c9" />
          <path d="M625.500 751.500h9v3h-9z" fill="#0b4f95" />
          <rect x="627" y="760" width="6" height="2.600" rx="1.300" fill="#8b8b8b" />
        </g>
      </Ic>
      <Ic x={652} y={720} w={44} h={48}>
        <defs>
          <linearGradient id="edg" x1="0" y1="0" x2="1" y2=".4">
            <stop offset="0" stopColor="#2aa4dd" />
            <stop offset=".55" stopColor="#2fc1c5" />
            <stop offset="1" stopColor="#62de5d" />
          </linearGradient>
        </defs>
        <g stroke="none">
          <circle cx="674" cy="744" r="12" fill="#1468bd" />
          <path d="M662.500 741c2-11 19-12 23-2 2 6-2 9-6 8.500-2 0-3-1-2.300-2.500 1-2 0-5.500-4-5.500-4.500-1.500-9.500-1-10.700 1.500z" fill="url(#edg)" />
          <path d="M662 744c0-5 8-6.500 11-4-4 1-5.500 5-4.500 9 1 4 5 6.500 8.500 6.200-8 2.500-15-3.500-15-11.200z" fill="#178fdb" />
          <path d="M673.500 740c-2.500 2-2 6.500 1 8.500 3 2 7 1.500 9.500 0-1 1.500-1.500 2-2.500 3-6 1.500-12-1-11.500-6.500.2-2.200 1.500-4 3.500-5z" fill="#0c5099" />
          <path d="M677.300 745c1-2 0-5-3.300-5.200-2 1.500-1.500 4.700.5 6.700 1.500 1.500 5 2.500 9 1l3.500 0-1 2c-3.500.5-9-1.500-8.700-4.500z" fill="#f3f3f3" />
        </g>
      </Ic>
      <Ic x={696} y={720} w={44} h={48}>
        <path d="M706 732h24v24h-24z" fill="#27acd6" stroke="none" />
        <path d="M711 751.500l4-14.500v12l9 2.500z" fill="#0e4d76" stroke="none" />
        <path d="M714.500 736.500h3v11.500h6.500v3.500h-10.500z" fill="#fff" stroke="none" />
      </Ic>
      <Ic x={740} y={720} w={44} h={48}>
        <path d="M751.500 732l10.500 5 10.500-5v18.500L762 756l-10.500-5.500z" fill="#c1272d" stroke="none" />
        <path d="M755.500 739.500l6.500 3.500 6.500-3.500v8.500l-6.500 3.500-6.500-3.500z" fill="#f3f3f3" stroke="none" />
      </Ic>
      <Ic x={784} y={720} w={44} h={48}><Chrome x={806} /></Ic>
      <Ic x={828} y={720} w={44} h={48}>
        <Office x={850} letter="X" c={["#2fb777", "#21a366", "#107c41", "#185c37", "#0f7a40"]} />
      </Ic>
      <Ic x={872} y={720} w={44} h={48}>
        <Office x={894} letter="W" c={["#41a5ee", "#2b7cd3", "#185abd", "#103f91", "#1b5bbe"]} />
      </Ic>
      <Ic x={916} y={720} w={44} h={48}>
        <rect x="919" y="725.500" width="38" height="37" rx="4" fill="#fbfbfb" stroke="#e4e4e4" strokeWidth="1" />
        <path d="M927 733h22v22h-22z" fill="#f4f7f8" stroke="none" />
        <path d="M949.500 734v21.500H928" stroke="#b4b4b4" strokeWidth="1" />
        <Logo x={937.5} y={743.5} s={1.2} c={TASK_BLUES} />
        <rect x="930" y="760" width="16" height="3" rx="1.500" fill="#e1251b" stroke="none" />
      </Ic>
      <Ic x={960} y={720} w={44} h={48}>
        <Chrome x={982} />
        <g stroke="none">
          <circle cx="990.500" cy="735" r="8" fill="#4c5a55" />
          <path d="M984 731c2-3 5-4 7-3l-3 6-4 4z" fill="#7fc0cc" />
          <path d="M990 741c0-5 1-8 4-10l2 5-2 5z" fill="#c9b884" />
          <path d="M987.500 738.500l2-8 3 1-2 7z" fill="#e8e8ee" />
          <path d="M990 732l4-3 2 3-3 4z" fill="#1f2a33" />
          <rect x="979" y="760" width="6" height="2.600" rx="1.300" fill="#8b8b8b" />
        </g>
      </Ic>
      <Ic x={1004} y={720} w={56} h={48}>
        <path d="M1015 733h17l-3 19h-14z" fill="#e6ebef" stroke="none" />
        <path d="M1016 734h3.300v3.300h-3.300zM1020.300 734h3.300v3.300h-3.300zM1024.600 734h3.300v3.300h-3.300zM1016 738.300h3.300v3.300h-3.300zM1016 742.600h3.300v3.300h-3.300z" fill="#d83b01" stroke="none" />
        <path d="M1029.500 737v12M1021 745.500h11" stroke="#98a1a9" strokeWidth="2.600" />
        <circle cx="1035.500" cy="745" r="2" stroke="#1595dd" strokeWidth="1.800" />
        <circle cx="1027.500" cy="753" r="2" stroke="#1595dd" strokeWidth="1.800" />
        <rect x="1023" y="760" width="6" height="2.600" rx="1.300" fill="#8b8b8b" stroke="none" />
      </Ic>
      <Ic x={1060} y={720} w={75} h={48}>
        <path d="M1067.500 747l5.500-5.500 5.500 5.500" stroke="#222" strokeWidth="1.300" />
        <path d="M1093 749.500c-5 0-5-6.500 0-6.800 1-5.500 8.500-5.500 10-.7 2 .3 2.500 2 2.500 3" fill="#aaa" stroke="#333" strokeWidth="1.300" />
        <circle cx="1101" cy="747.500" r="5" fill="#f3f3f3" stroke="none" />
        <path d="M1097.500 747c.7-3 4.500-3.500 6.500-1M1104.500 748.500c-1 2.800-4.500 3-6.300.8M1104.500 743v3h-3M1097.700 752v-2.800h2.800" stroke="#1874d1" strokeWidth="1.300" />
        <path d="M1114.500 742c1.500-5.500 9.500-6.500 12.500-1M1127.500 736.500v4.700h-4.500M1115.500 747c.5 2.500 2 4 4 4.500M1114 751.500h5v-4.500" stroke="#222" strokeWidth="1.300" />
        <circle cx="1124.800" cy="748" r="4.100" fill="#f7950e" stroke="none" />
      </Ic>
      <div className="flex w-[40px] flex-col items-center pt-[2px] text-[#1a1a1a]">
        <span className="leading-[16px] tracking-[0.1px]">ENG</span>
        <span className="leading-[16px] tracking-[0px]">IN</span>
      </div>
      <Ic x={1175} y={720} w={80} h={48}>
        <g stroke="#333" strokeWidth="1.200">
          <path d="M1185 742c4.500-5 11.500-5 16 0M1187.500 744.500c3.200-3.500 7.800-3.500 11 0M1190 747c2-2 4-2 6 0" />
          <circle cx="1193" cy="748.500" r="1" fill="#333" />
          <path d="M1209.500 742h2.500l4-3.500v11.500l-4-3.500h-2.500zM1218.500 742c1 1.500 1 3 0 4.500M1221 740c2 2.500 2 6 0 8.500M1223.500 738.500c2.500 3.500 2.500 8 0 11.500" />
          <path d="M1241 740h4.500c1.500 0 2 .6 2 2v4c0 1.400-.6 2-2 2h-8M1248.500 742.500v3" />
          <path d="M1234 746c-1-5 1.500-7.500 5.500-8 .5 4-.5 7.500-3.500 8.500l-2 2z" fill="#333" strokeWidth=".8" />
          <path d="M1240 747.500v-2.500l2-3v3.500h1.500v-3" strokeWidth="1" />
        </g>
      </Ic>
      <div className="flex w-[67px] flex-col items-end text-[#1a1a1a]">
        <span className="leading-[16px]">11:33</span>
        <span className="leading-[16px]">10-10-2023</span>
      </div>
      <div className="ml-2 flex h-4 w-4 items-center justify-center rounded-full bg-[#e1251b] text-[10.5px] leading-none text-white">1</div>
    </div>
  );
}

export default function App() {
  return (
    <div className="flex h-[768px] w-[1366px] flex-col overflow-hidden whitespace-nowrap bg-white font-['Open_Sans','Noto_Sans',sans-serif] text-[11.5px] leading-[16px] tracking-[-0.2px] text-black">
      <TitleBar />
      <Menu />
      <Toolbar />
      <div className="flex h-[585px] w-full shrink-0 bg-[#f5f5f5]">
        <Sidebar />
        <div className="flex grow gap-[6px] pl-[6px]">
          <Cards />
          <Workspace />
        </div>
      </div>
      <BottomTabs />
      <Status />
      <Taskbar />
    </div>
  );
}
